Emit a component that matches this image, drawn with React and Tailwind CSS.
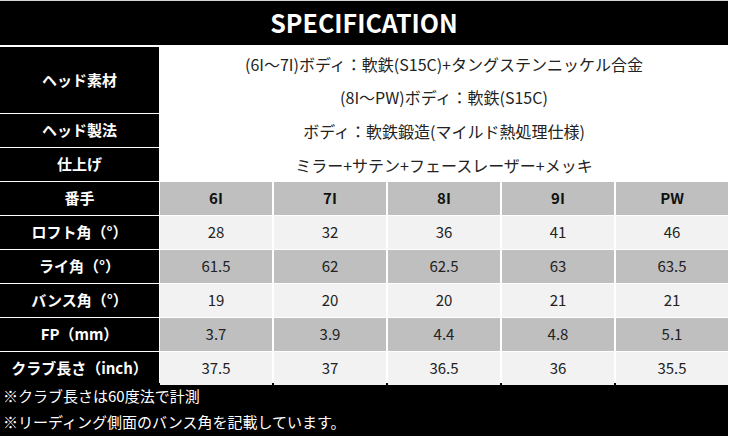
import React from 'react'

const font = { fontFamily: '"Noto Sans CJK JP", "Noto Sans", sans-serif' }

const specs = [
  { label: 'ロフト角（°）', values: ['28', '32', '36', '41', '46'], bg: 'bg-[#f2f2f2]' },
  { label: 'ライ角（°）', values: ['61.5', '62', '62.5', '63', '63.5'], bg: 'bg-[#bfbfbf]' },
  { label: 'バンス角（°）', values: ['19', '20', '20', '21', '21'], bg: 'bg-[#f2f2f2]' },
  { label: 'FP（mm）', values: ['3.7', '3.9', '4.4', '4.8', '5.1'], bg: 'bg-[#bfbfbf]' },
  { label: 'クラブ長さ（inch）', values: ['37.5', '37', '36.5', '36', '35.5'], bg: 'bg-[#f2f2f2]' },
]

function Label({ children, className = '' }) {
  return (
    <div className={`w-[159px] shrink-0 bg-black text-white font-bold text-[15px] flex items-center justify-center ${className}`}>
      {children}
    </div>
  )
}

export default function App() {
  return (
    <div className="w-[730px] h-[436px] bg-white overflow-hidden" style={font}>
      <div className="w-[728px] border-t border-[#d4d4d4] flex flex-col gap-y-[1px]">
        {/* Title */}
        <div className="h-[44px] bg-black text-white font-bold text-[25px] flex items-center justify-center mb-[1px]">
          SPECIFICATION
        </div>

        {/* Head material */}
        <div className="flex h-[66px] gap-x-[1px]">
          <Label>ヘッド素材</Label>
          <div className="flex-1 bg-white flex flex-col text-[16px] text-[#222]">
            <div className="h-[33px] flex items-center justify-center">(6I〜7I)ボディ：軟鉄(S15C)+タングステンニッケル合金</div>
            <div className="h-[33px] flex items-center justify-center">(8I〜PW)ボディ：軟鉄(S15C)</div>
          </div>
        </div>

        <div className="flex h-[33px] gap-x-[1px]">
          <Label>ヘッド製法</Label>
          <div className="flex-1 bg-white flex items-center justify-center text-[16px] text-[#222]">
            ボディ：軟鉄鍛造(マイルド熱処理仕様)
          </div>
        </div>

        <div className="flex h-[33px] gap-x-[1px]">
          <Label>仕上げ</Label>
          <div className="flex-1 bg-white flex items-center justify-center text-[16px] text-[#222]">
            ミラー+サテン+フェースレーザー+メッキ
          </div>
        </div>

        {/* Club numbers */}
        <div className="flex h-[33px] gap-x-[1px]">
          <Label>番手</Label>
          <div className="flex-1 grid grid-cols-5 gap-x-[2px]">
            {['6I', '7I', '8I', '9I', 'PW'].map((n) => (
              <div key={n} className="bg-[#bfbfbf] flex items-center justify-center font-bold text-[15px] text-[#111]">
                {n}
              </div>
            ))}
          </div>
        </div>

        {specs.map((row) => (
          <div key={row.label} className="flex h-[33px] gap-x-[1px]">
            <Label>{row.label}</Label>
            <div className="flex-1 grid grid-cols-5 gap-x-[2px]">
              {row.values.map((v, i) => (
                <div key={i} className={`${row.bg} flex items-center justify-center text-[15px] text-[#222]`}>
                  {v}
                </div>
              ))}
            </div>
          </div>
        ))}
      </div>

      {/* Notes */}
      <div className="w-[728px] h-[60px] bg-black text-white text-[15px] px-[3px]">
        <div className="-mt-[2px] leading-[26px]">
          <div>※クラブ長さは60度法で計測</div>
          <div>※リーディング側面のバンス角を記載しています。</div>
        </div>
      </div>
    </div>
  )
}
